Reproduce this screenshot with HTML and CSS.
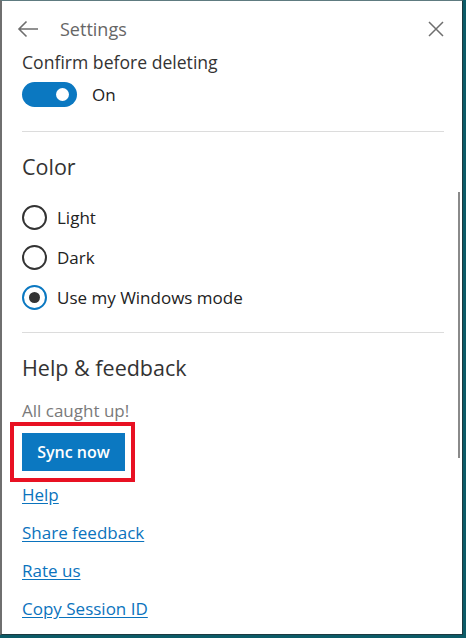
FILE: index.html
```html
<!DOCTYPE html>
<html>
<head>
<meta charset="utf-8">
<link rel="stylesheet" href="styles.css">
</head>
<body>
<div class="panel">
  <div class="scrollbar"></div>
  <header class="header">
    <svg class="back" width="22" height="18" viewBox="0 0 22 18"><path d="M21 9H2M9.5 1.5L2 9l7.5 7.5" fill="none" stroke="#6e6e6e" stroke-width="1.6"/></svg>
    <span class="title">Settings</span>
    <svg class="close" width="16" height="16" viewBox="0 0 16 16"><path d="M1 1l14 14M15 1L1 15" fill="none" stroke="#6e6e6e" stroke-width="1.5"/></svg>
  </header>
  <div class="content">
    <div class="label">Confirm before deleting</div>
    <div class="toggle-row">
      <span class="toggle"><span class="knob"></span></span>
      <span class="toggle-text">On</span>
    </div>
    <hr class="divider first">
    <h2 class="heading">Color</h2>
    <div class="radios">
      <div class="radio-row"><span class="radio"></span><span>Light</span></div>
      <div class="radio-row"><span class="radio"></span><span>Dark</span></div>
      <div class="radio-row"><span class="radio checked"><span class="dot"></span></span><span>Use my Windows mode</span></div>
    </div>
    <hr class="divider second">
    <h2 class="heading">Help &amp; feedback</h2>
    <div class="status">All caught up!</div>
    <div class="highlight"><button class="sync">Sync now</button></div>
    <div class="links">
      <a href="#">Help</a>
      <a href="#">Share feedback</a>
      <a href="#">Rate us</a>
      <a href="#">Copy Session ID</a>
    </div>
  </div>
</div>
</body>
</html>
```

FILE: styles.css
```css
html, body {
  margin: 0;
  padding: 0;
  height: 638px;
  overflow: hidden;
}
body {
  background: #0c5b67;
  font-family: "Open Sans", "Noto Sans", sans-serif;
  color: #2b2b2b;
}
.panel {
  position: relative;
  width: 463px;
  height: 635px;
  background: #fff;
  border-left: 2px solid #6f6f6f;
  border-top: 1px solid #5e7b80;
  border-right: 1px solid #1d3a40;
  border-bottom: 1px solid #1d3a40;
  box-sizing: border-box;
}
.scrollbar {
  position: absolute;
  left: 456px;
  top: 191px;
  width: 2px;
  height: 266px;
  background: #8a8a8a;
}
.header {
  display: flex;
  align-items: center;
  height: 50px;
  padding: 3px 0 0 15px;
  box-sizing: border-box;
  height: 53px;
}
.back { margin-right: 21px; }
.title {
  font-size: 18px;
  color: #666;
  flex: 1;
}
.close { margin-right: 18px; }
.content {
  padding: 0 18px 0 20px;
}
.label {
  font-size: 17.6px;
  line-height: 22px;
  color: #333;
  margin-top: -3px;
}
.toggle-row {
  display: flex;
  align-items: center;
  margin-top: 9px;
  height: 25px;
}
.toggle {
  position: relative;
  width: 55px;
  height: 25px;
  border-radius: 13px;
  background: #0b78c1;
  display: inline-block;
}
.knob {
  position: absolute;
  right: 8px;
  top: 6px;
  width: 13px;
  height: 13px;
  border-radius: 50%;
  background: #fff;
}
.toggle-text {
  margin-left: 15px;
  font-size: 17px;
  color: #222;
}
.divider {
  border: 0;
  height: 1px;
  background: #dcdcdc;
  margin: 24px 0 0 0;
}
.heading {
  font-weight: normal;
  font-size: 21.5px;
  color: #333;
  margin: 21px 0 0;
  line-height: 28px;
}
.radios {
  margin-top: 24px;
  display: flex;
  flex-direction: column;
  gap: 15px;
}
.radio-row {
  display: flex;
  align-items: center;
  height: 25px;
  font-size: 17px;
  color: #222;
}
.radio {
  width: 25px;
  height: 25px;
  box-sizing: border-box;
  border: 2px solid #333;
  border-radius: 50%;
  margin-right: 10px;
  display: flex;
  align-items: center;
  justify-content: center;
}
.radio.checked { border-color: #0b78c1; }
.dot {
  width: 11px;
  height: 11px;
  border-radius: 50%;
  background: #333;
}
.divider.second { margin-top: 22px; }
.status {
  margin-top: 18px;
  font-size: 17px;
  line-height: 22px;
  color: #7a7a7a;
}
.highlight {
  display: inline-block;
  margin: 0 0 0 -12px;
  border: 4px solid #e81123;
  padding: 7px 6px 7px 8px;
}
.sync {
  display: block;
  width: 103px;
  height: 38px;
  border: 0;
  background: #0b78c1;
  color: #fff;
  font-family: "Open Sans", "Noto Sans", sans-serif;
  font-weight: 600;
  font-size: 16px;
  padding: 0;
}
.links {
  display: flex;
  flex-direction: column;
  align-items: flex-start;
  margin-top: -6px;
}
.links a {
  font-size: 17px;
  line-height: 38px;
  color: #0b73bd;
  text-decoration: underline;
  text-underline-offset: 2px;
}
```
